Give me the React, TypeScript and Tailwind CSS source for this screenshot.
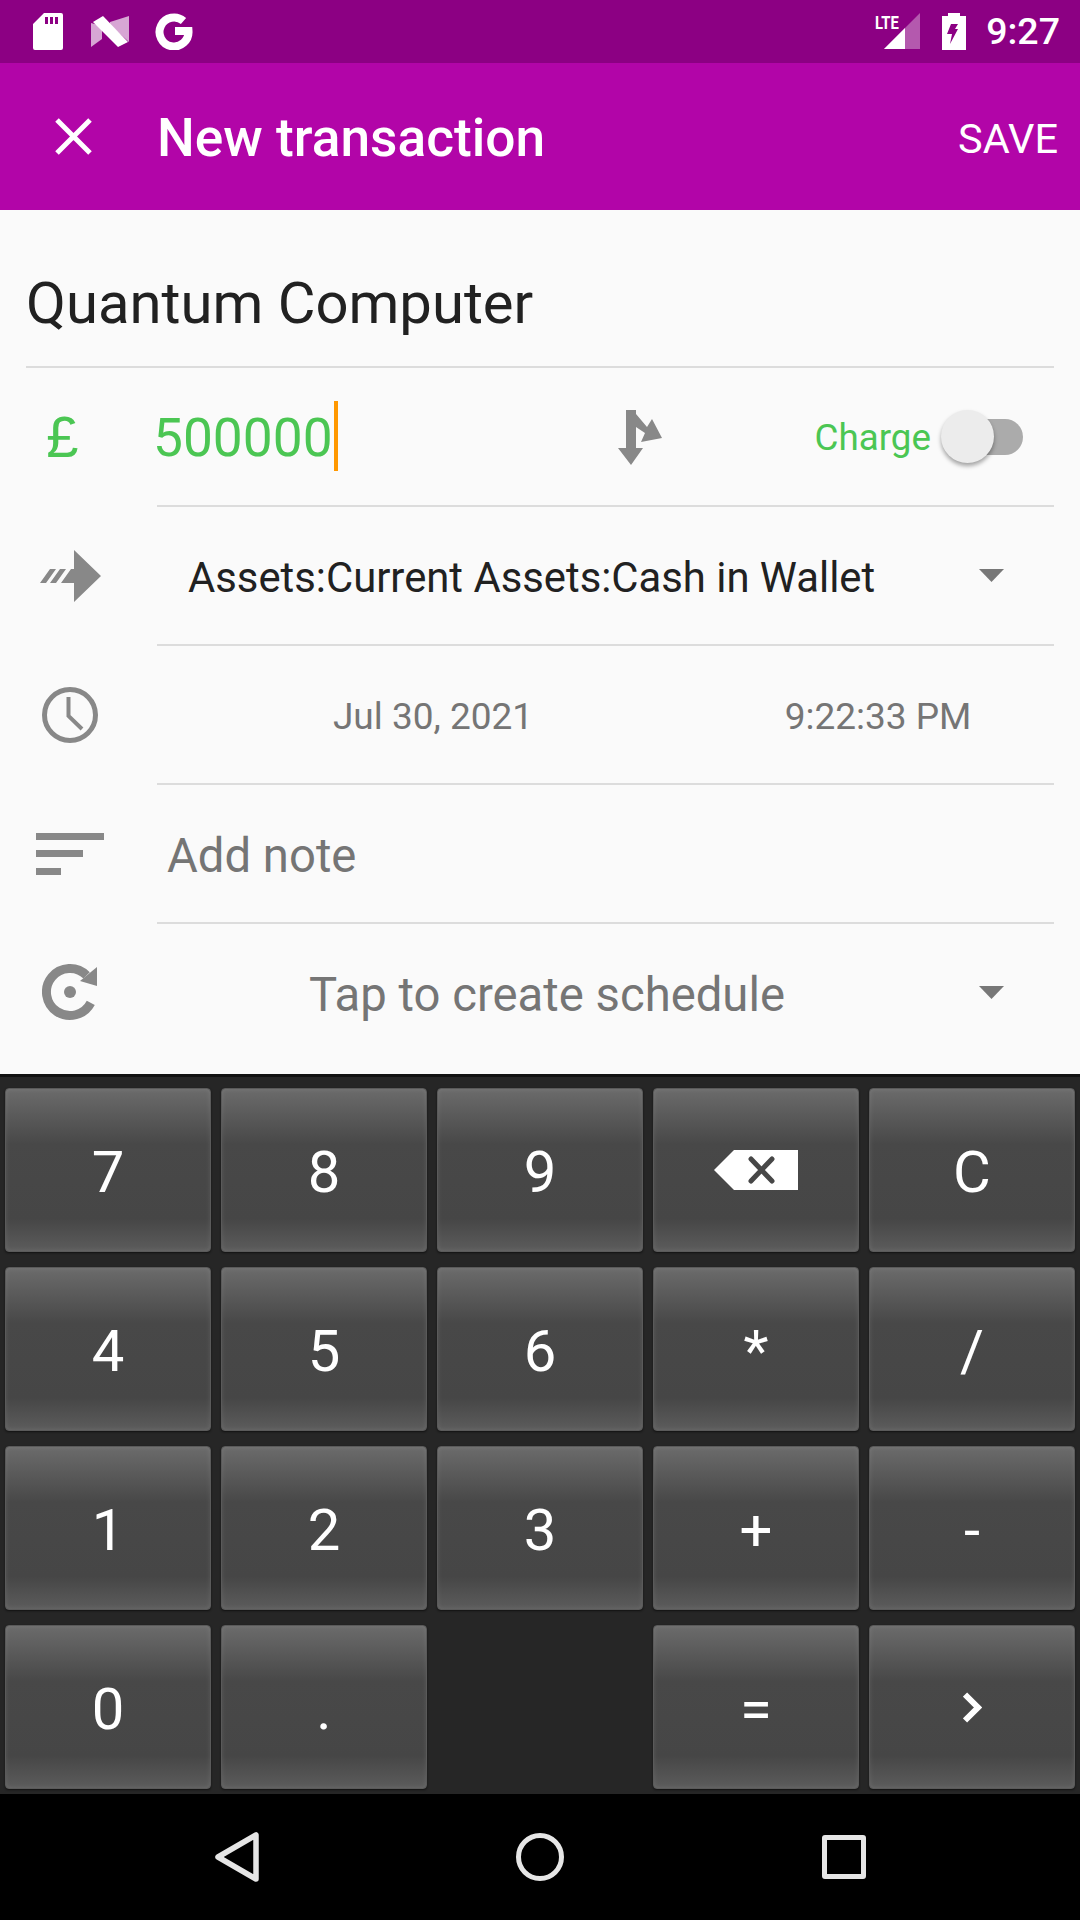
const keys = ["7", "8", "9", "back", "C", "4", "5", "6", "*", "/", "1", "2", "3", "+", "-", "0", ".", "", "=", "next"];

function SdCard() {
  return (
    <svg width="30" height="37" viewBox="0 0 30 37">
      <path fillRule="evenodd" fill="#fff" d="M11 0H28Q30 0 30 2V35Q30 37 28 37H2Q0 37 0 35V11ZM12 4V11H15V4ZM17 4V11H20V4ZM22 4V11H25V4Z" />
    </svg>
  );
}

function NLogo() {
  return (
    <svg width="38" height="31" viewBox="0 0 38 31">
      <path fill="#fff" fillOpacity="0.65" d="M0 7V31L11 23V10ZM19 6L38 0V26L19 9Z" />
      <path fill="#fff" d="M2 6L12 0L37 26L27 31Z" />
    </svg>
  );
}

function GLogo() {
  return (
    <svg width="38" height="37" viewBox="0 0 38 37">
      <path fill="none" stroke="#fff" strokeWidth="8" d="M28.5 8A14.5 14.5 0 1 0 33.5 18H20" />
    </svg>
  );
}

function Signal() {
  return (
    <svg width="36" height="36" viewBox="0 0 36 36">
      <path fill="#fff" fillOpacity="0.35" d="M36 0V36H0Z" />
      <path fill="#fff" d="M21 15V36H0Z" />
    </svg>
  );
}

function Battery() {
  return (
    <svg width="24" height="37" viewBox="0 0 24 37">
      <path fill="#fff" fillRule="evenodd" d="M6 0H18V3H24V37H0V3H6ZM9 11L5 21H10L8 31L16 16H13L16 11Z" />
    </svg>
  );
}

function CloseIcon() {
  return (
    <svg width="37" height="37" viewBox="0 0 37 37">
      <path stroke="#fff" strokeWidth="5" d="M2 2L35 35M35 2L2 35" />
    </svg>
  );
}

function Caret() {
  return (
    <svg width="25" height="13" viewBox="0 0 25 13">
      <path fill="#777" d="M0 0H25L12.5 13Z" />
    </svg>
  );
}

function SplitIcon() {
  return (
    <svg className="mt-[4px]" width="44" height="56" viewBox="0 0 44 56">
      <path fill="#888" d="M8 0H18V4L29 17L34 9L44 28L23 32L27 23L18 17V38H25L13 55L0 38H8Z" />
    </svg>
  );
}

function TransferIcon() {
  return (
    <svg width="61" height="52" viewBox="0 0 61 52">
      <path fill="#888" d="M34 0L61 26L34 52V33H21L31 19H34ZM0 33L10 19H16L6 33ZM10 33L20 19H26L16 33Z" />
    </svg>
  );
}

function ClockIcon() {
  return (
    <svg width="56" height="56" viewBox="0 0 56 56">
      <circle cx="28" cy="28" r="25.5" fill="none" stroke="#888" strokeWidth="5" />
      <path fill="none" stroke="#888" strokeWidth="4" d="M26.5 10V29L40 42" />
    </svg>
  );
}

function NoteIcon() {
  return (
    <svg width="68" height="42" viewBox="0 0 68 42">
      <path fill="#888" d="M0 0H68V7H0ZM0 17H47V24H0ZM0 35H25V42H0Z" />
    </svg>
  );
}

function RepeatIcon() {
  return (
    <svg width="56" height="58" viewBox="0 0 56 58">
      <path fill="none" stroke="#888" strokeWidth="9" d="M44.6 11.4A23.5 23.5 0 1 0 48.8 38.9" />
      <path fill="#888" d="M55 3V22L38 17Z" />
      <circle cx="28" cy="28" r="6" fill="#888" />
    </svg>
  );
}

function BackspaceIcon() {
  return (
    <svg width="84" height="40" viewBox="0 0 84 40">
      <path fill="#fff" d="M20 0H84V40H20L0 20Z" />
      <path stroke="#474747" strokeWidth="5" strokeLinecap="round" d="M37 9L58 31M58 9L37 31" />
    </svg>
  );
}

function NextIcon() {
  return (
    <svg width="19" height="31" viewBox="0 0 19 31">
      <path fill="none" stroke="#fff" strokeWidth="6" d="M2 2.5L15 15.5L2 28.5" />
    </svg>
  );
}

function Key({ label }: { label: string }) {
  if (!label) return <div />;
  const isIcon = label === "back" || label === "next";
  return (
    <div className={`flex items-center justify-center rounded-[4px] border border-[#5a5a5a] bg-[linear-gradient(to_bottom,#6b6b6b_0%,#484848_34%,#464646_80%,#5c5c5c_100%)] text-[58px] leading-none text-white shadow-[inset_0_0_5px_rgba(255,255,255,0.1),0_1px_2px_#111] ${isIcon ? "" : "pt-[4px]"}`}>
      {label === "back" ? <BackspaceIcon /> : label === "next" ? <NextIcon /> : label}
    </div>
  );
}

export default function App() {
  return (
    <div className="flex h-[1920px] w-[1080px] flex-col overflow-hidden bg-[#fafafa] [font-family:Roboto,sans-serif]">
      {/* status bar */}
      <div className="flex h-[63px] items-center bg-[#8c0083] pl-[33px] pr-[20px]">
        <SdCard />
        <div className="ml-[28px]"><NLogo /></div>
        <div className="ml-[26px]"><GLogo /></div>
        <div className="relative ml-auto mr-[22px] mt-[-1px]">
          <span className="absolute right-[21px] top-[1px] origin-right scale-x-[0.8] text-[18.5px] font-bold leading-none text-white">LTE</span>
          <Signal />
        </div>
        <Battery />
        <span className="ml-[20px] text-[37.5px] font-medium leading-none text-white">9:27</span>
      </div>

      {/* toolbar */}
      <div className="flex h-[147px] items-center bg-[#b205a8] pr-[22px]">
        <div className="ml-[55px]"><CloseIcon /></div>
        <span className="ml-[65px] pt-[5px] text-[53.25px] font-medium leading-none text-white">New transaction</span>
        <span className="ml-auto pt-[4px] text-[41.5px] leading-none text-white">SAVE</span>
      </div>

      {/* form */}
      <div className="h-[158px] px-[26px]">
        <div className="flex h-full items-center border-b-2 border-[#dcdcdc] pt-[31px] text-[58px] leading-none text-[#212121]">
          Quantum Computer
        </div>
      </div>

      <div className="flex h-[139px]">
        <div className="flex w-[157px] items-center justify-center pr-[32px] text-[58px] leading-none text-[#4bc653] [font-family:'Liberation_Sans',sans-serif]">£</div>
        <div className="mr-[26px] flex flex-1 items-center border-b-2 border-[#dcdcdc]">
          <div className="ml-[-4px] flex w-[465px] items-center text-[53.25px] leading-none text-[#4bc653]">
            <span className="pt-[4px]">500000</span>
            <span className="ml-[1px] h-[70px] w-[4px] bg-[#ff9800]" />
          </div>
          <SplitIcon />
          <span className="ml-auto pt-[4px] text-[36.75px] leading-none text-[#4bc653]">Charge</span>
          <div className="relative ml-[47px] mr-[31px] mt-[1px] h-[36px] w-[45px] rounded-r-full bg-[#ababab]">
            <div className="absolute left-[-37px] top-[-9px] h-[53px] w-[53px] rounded-full bg-[#ececec] shadow-[0_3px_4px_rgba(0,0,0,0.35)]" />
          </div>
        </div>
      </div>

      <div className="flex h-[139px]">
        <div className="flex w-[157px] items-center justify-center pr-[17px]"><TransferIcon /></div>
        <div className="mr-[26px] flex flex-1 items-center border-b-2 border-[#dcdcdc] pl-[31px] text-[41.8px] leading-none text-[#212121]">
          <span className="pt-[5px]">Assets:Current Assets:Cash in Wallet</span>
          <div className="ml-auto mr-[50px]"><Caret /></div>
        </div>
      </div>

      <div className="flex h-[139px]">
        <div className="flex w-[157px] items-center justify-center pr-[17px]"><ClockIcon /></div>
        <div className="mr-[26px] flex flex-1 items-center border-b-2 border-[#dcdcdc] pt-[4px] text-[37px] leading-none text-[#757575]">
          <span className="w-[552px] text-center">Jul 30, 2021</span>
          <span className="w-[338px] text-center">9:22:33 PM</span>
        </div>
      </div>

      <div className="flex h-[139px]">
        <div className="flex w-[157px] items-center justify-center pr-[17px]"><NoteIcon /></div>
        <div className="mr-[26px] flex flex-1 items-center border-b-2 border-[#dcdcdc] pl-[10px] pt-[8px] text-[47.25px] leading-none text-[#757575]">
          Add note
        </div>
      </div>

      <div className="flex h-[151px]">
        <div className="flex w-[157px] items-center justify-center pb-[12px] pr-[17px]"><RepeatIcon /></div>
        <div className="mr-[26px] flex flex-1 items-center pb-[12px] text-[47.25px] leading-none text-[#757575]">
          <span className="w-[780px] pt-[5px] text-center">Tap to create schedule</span>
          <div className="ml-auto mr-[50px]"><Caret /></div>
        </div>
      </div>

      {/* keypad */}
      <div className="grid h-[720px] grid-cols-[repeat(5,206px)] grid-rows-[repeat(4,164px)] gap-x-[10px] gap-y-[15px] border-t-[3px] border-[#111] bg-[#262626] px-[5px] pt-[11px]">
        {keys.map((k, i) => (
          <Key key={i} label={k} />
        ))}
      </div>

      {/* nav bar */}
      <div className="flex h-[126px] items-center bg-black">
        <svg className="ml-[215px]" width="44" height="50" viewBox="0 0 44 50">
          <path fill="none" stroke="#e6e6e6" strokeWidth="5.5" strokeLinejoin="round" d="M3 25L41 3V47Z" />
        </svg>
        <div className="ml-[257px] h-[48px] w-[48px] rounded-full border-[5.5px] border-[#e6e6e6]" />
        <div className="ml-[258px] h-[44px] w-[44px] rounded-[3px] border-[5.5px] border-[#e6e6e6]" />
      </div>
    </div>
  );
}
